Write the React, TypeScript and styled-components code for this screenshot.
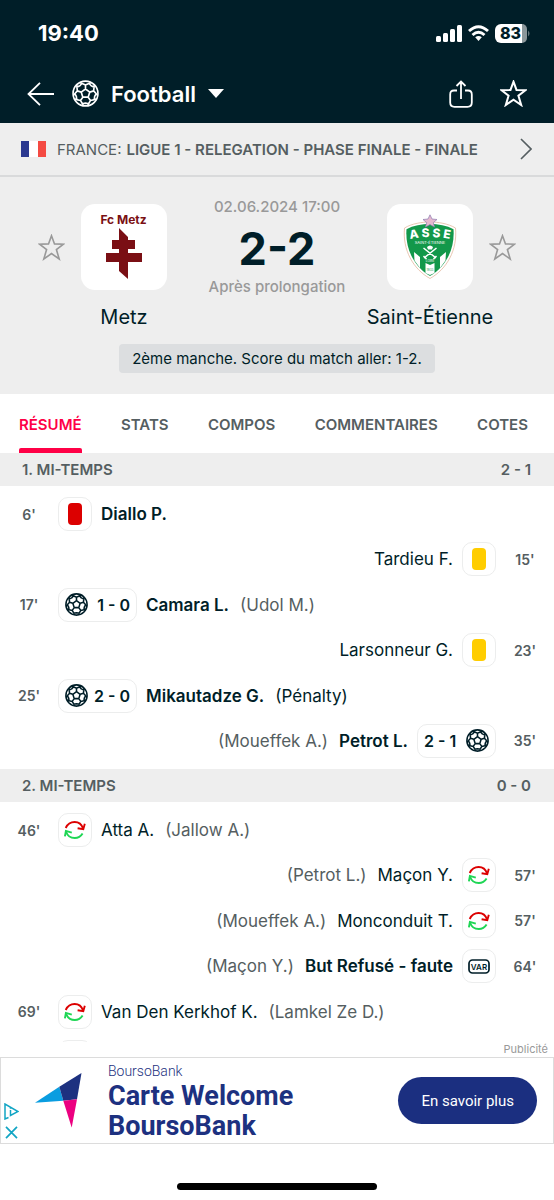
import React from "react";
import styled, { createGlobalStyle } from "styled-components";

const ink = "#001e28";
const grey = "#555e61";
const panel = "#eeeeee";
const accent = "#ff0046";

const GlobalStyle = createGlobalStyle`
  *, *::before, *::after { box-sizing: border-box; }
  body {
    margin: 0;
    background: #fff;
    color: ${ink};
    font-family: Inter, "Liberation Sans", sans-serif;
  }
  button { font: inherit; color: inherit; background: none; border: 0; padding: 0; cursor: pointer; }
  h1, h2, p, ul { margin: 0; padding: 0; }
  svg { display: block; flex: none; }
`;

const Screen = styled.div`
  display: flex;
  flex-direction: column;
  height: 100vh;
  overflow: hidden;
`;

const Header = styled.header`
  flex: none;
  background: ${ink};
  color: #fff;
  padding-top: 18px;
`;

const StatusBar = styled.div`
  display: flex;
  align-items: center;
  justify-content: space-between;
  height: 30px;
  padding: 0 23px 0 38px;
`;

const Clock = styled.time`
  font-size: 22px;
  font-weight: 700;
`;

const StatusIcons = styled.div`
  display: flex;
  align-items: center;
  gap: 6px;
`;

const NavBar = styled.nav`
  display: flex;
  align-items: center;
  height: 75px;
  padding: 16px 27px 0;
`;

const SportButton = styled.button`
  display: flex;
  align-items: center;
  gap: 12px;
  margin: 0 auto 0 18px;
  font-size: 22px;
  font-weight: 600;
`;

const IconButton = styled.button`
  display: flex;
`;

const NavActions = styled.div`
  display: flex;
  align-items: center;
  gap: 27px;
`;

const League = styled.a`
  flex: none;
  display: flex;
  align-items: center;
  height: 54px;
  padding: 0 22px 0 21px;
  background: ${panel};
  border-bottom: 2px solid #d9dadb;
  color: ${grey};
  font-size: 15px;
  text-decoration: none;
  white-space: nowrap;
`;

const Flag = styled.span`
  width: 25px;
  height: 16px;
  margin-right: 11px;
  background: linear-gradient(90deg, #2b3990 0 33%, #fff 33% 67%, #f44a42 67%);
`;

const LeagueName = styled.strong`
  margin-left: 5px;
  margin-right: auto;
  font-weight: 600;
`;

const Match = styled.section`
  flex: none;
  padding: 27px 38px 21px;
  background: ${panel};
`;

const Duel = styled.div`
  display: flex;
  justify-content: space-between;
`;

const Team = styled.div<{ $away?: boolean }>`
  display: grid;
  grid-template-columns: ${(p) => (p.$away ? "86px 27px" : "27px 86px")};
  grid-template-areas: ${(p) => (p.$away ? '"logo star" "name ."' : '"star logo" ". name"')};
  column-gap: 16px;
  row-gap: 14px;
  align-items: center;
`;

const StarButton = styled.button`
  grid-area: star;
  color: #999;
`;

const Logo = styled.div`
  grid-area: logo;
  display: flex;
  align-items: center;
  justify-content: center;
  height: 86px;
  border-radius: 14px;
  background: #fff;
`;

const TeamName = styled.h2`
  grid-area: name;
  justify-self: center;
  font-size: 20px;
  font-weight: 400;
  line-height: 26px;
  white-space: nowrap;
`;

const Result = styled.div`
  display: flex;
  flex-direction: column;
  align-items: center;
  margin-top: -7px;
  color: #999;
  font-size: 15px;
  font-weight: 500;
  line-height: 20px;
  white-space: nowrap;
`;

const Score = styled.h1`
  margin: 12px 0 8px;
  color: ${ink};
  font-size: 45px;
  font-weight: 700;
  line-height: 40px;
`;

const Note = styled.p`
  width: fit-content;
  margin: 14px auto 0;
  padding: 0 13px;
  border-radius: 4px;
  background: #dcdee0;
  font-size: 15px;
  line-height: 29px;
`;

const Tabs = styled.div`
  flex: none;
  display: flex;
  justify-content: space-between;
  height: 59px;
  padding: 0 26px 0 19px;
`;

const Tab = styled.button<{ $active?: boolean }>`
  padding-top: 6px;
  border-bottom: 5px solid transparent;
  color: ${(p) => (p.$active ? accent : grey)};
  font-size: 15px;
  font-weight: 600;
  position: relative;

  &::after {
    content: "";
    position: absolute;
    inset: auto 0 -5px;
    height: 5px;
    border-radius: 2px 2px 0 0;
    background: ${(p) => (p.$active ? accent : "transparent")};
  }
`;

const Timeline = styled.main`
  flex: 1 1 0;
  min-height: 0;
  overflow: hidden;
`;

const PeriodBar = styled.h2`
  display: flex;
  justify-content: space-between;
  padding: 0 23px 0 22px;
  background: ${panel};
  color: ${grey};
  font-size: 15px;
  font-weight: 600;
  line-height: 33px;
`;

const EventList = styled.ul`
  display: flex;
  flex-direction: column;
  justify-content: space-between;
  min-height: 283px;
  padding: 11px 0;
  list-style: none;
`;

const EventRow = styled.li<{ $away?: boolean }>`
  display: flex;
  flex-direction: ${(p) => (p.$away ? "row-reverse" : "row")};
  align-items: center;
  height: 34px;
  font-size: 17px;
  white-space: nowrap;
`;

const Minute = styled.span`
  width: 58px;
  color: ${grey};
  font-size: 14px;
  font-weight: 600;
  text-align: center;
`;

const Chip = styled.span<{ $away?: boolean; $wide?: boolean }>`
  display: flex;
  flex-direction: ${(p) => (p.$away ? "row-reverse" : "row")};
  align-items: center;
  justify-content: ${(p) => (p.$wide ? "space-between" : "center")};
  width: ${(p) => (p.$wide ? "79px" : "34px")};
  height: 34px;
  padding: 0 6px;
  border: 1px solid #eceded;
  border-radius: 10px;
  font-size: 16px;
  font-weight: 600;
`;

const Card = styled.span<{ $color: string }>`
  flex: none;
  width: 14px;
  height: 22px;
  border-radius: 4px;
  background: ${(p) => p.$color};
`;

const Player = styled.span<{ $bold?: boolean }>`
  margin: 0 9px;
  font-weight: ${(p) => (p.$bold ? 600 : 400)};
`;

const Detail = styled.span<{ $dark?: boolean }>`
  margin: 0 2px;
  color: ${(p) => (p.$dark ? ink : grey)};
`;

const AdLabel = styled.p`
  flex: none;
  padding-right: 6px;
  color: #999;
  font-size: 11px;
  line-height: 15px;
  text-align: right;
`;

const Ad = styled.aside`
  flex: none;
  display: flex;
  align-items: center;
  height: 87px;
  padding: 0 16px 0 3px;
  border: 1px solid #dcdcdc;
  color: #1d3180;
  font-family: Roboto, sans-serif;
`;

const AdMarks = styled.div`
  align-self: flex-end;
  display: flex;
  flex-direction: column;
  gap: 6px;
  margin: 0 16px 4px 0;
`;

const AdCopy = styled.div`
  margin: 0 auto 0 26px;
`;

const Brand = styled.p`
  font-size: 14px;
  font-weight: 300;
  line-height: 20px;
`;

const AdTitle = styled.p`
  font-size: 27px;
  font-weight: 700;
  line-height: 30px;
`;

const AdButton = styled.button`
  height: 47px;
  padding: 0 23px;
  border-radius: 24px;
  background: #1b2f80;
  color: #fff;
  font-size: 15px;
  white-space: nowrap;
`;

const HomeArea = styled.footer`
  flex: none;
  display: flex;
  justify-content: center;
  align-items: flex-end;
  height: 56px;
  padding-bottom: 10px;
`;

const HomeIndicator = styled.span`
  width: 36%;
  height: 7px;
  border-radius: 4px;
  background: #000;
`;

const polar = (r: number, deg: number) => {
  const a = (deg * Math.PI) / 180;
  return `${(14 + r * Math.cos(a)).toFixed(2)} ${(14 + r * Math.sin(a)).toFixed(2)}`;
};

// Centre pentagon, a spoke from each corner, and the rim seams of the outer panels.
const ballSeams = [0, 1, 2, 3, 4]
  .map((k) => {
    const a = -90 + 72 * k;
    return [
      `M${polar(4.7, a)}L${polar(4.7, a + 72)}`,
      `M${polar(4.7, a)}L${polar(8.9, a)}`,
      `M${polar(12.9, a - 27)}L${polar(8.9, a)}L${polar(12.9, a + 27)}`,
      `M${polar(11.2, a + 18)}L${polar(10, a + 36)}L${polar(11.2, a + 54)}`,
    ].join("");
  })
  .join("");

const Ball = ({ size, stroke = 1.9 }: { size: number; stroke?: number }) => (
  <svg width={size} height={size} viewBox="0 0 28 28" fill="none" stroke="currentColor" strokeWidth={stroke} strokeLinejoin="round">
    <circle cx="14" cy="14" r="12.9" />
    <path d={ballSeams} />
  </svg>
);

const Star = ({ width = 2 }: { width?: number }) => (
  <svg width="27" height="27" viewBox="0 0 27 27" fill="none" stroke="currentColor" strokeWidth={width}>
    <path d="M13.5 1.7 16.5 9.9 25.5 10.2 18.4 15.6 21.2 25 13.5 19.6 5.8 25 8.6 15.6 1.5 10.2 10.5 9.9Z" />
  </svg>
);

const Swap = () => (
  <svg width="22" height="18" viewBox="0 0 22 18" fill="none" strokeWidth="1.9">
    <g stroke="#dc0000">
      <path d="M1.7 7C3.8 2.5 7 1 10.6 1c4 0 7.2 2.6 8.4 6.6" />
      <path d="M13.6 7.3 19.3 8.2 20.8 2.7" />
    </g>
    <g stroke="#1fd655">
      <path d="M18.6 12.5C16.6 15.7 13.9 17 10.8 17 6.700 17 3.3 14.6 2 10.5" />
      <path d="M.9 15.3 1.9 9.9 7.8 11.7" />
    </g>
  </svg>
);

const Var = () => (
  <svg width="22" height="15" viewBox="0 0 22 15">
    <rect x="1" y="1" width="20" height="13" rx="3.5" fill="none" stroke={ink} strokeWidth="1.7" />
    <text x="11" y="10.8" textAnchor="middle" fontSize="8" fontWeight="600" fill={ink}>VAR</text>
  </svg>
);

const MetzLogo = () => (
  <svg width="60" height="70" viewBox="0 0 60 70" fill="#7a0f14">
    <text x="29.5" y="12" textAnchor="middle" fontSize="12" fontWeight="700">Fc Metz</text>
    <path d="M25 16 34 25V28H41V37H34V41H48V50H34V67L25 59V50H12V41H25V37H18V28H25Z" />
  </svg>
);

const AsseLogo = () => (
  <svg width="54" height="66" viewBox="0 0 54 66">
    <path d="M27 8C35 8 45 9.500 52.500 14 54.500 36 44 55 27 64.500 10 55-.5 36 1.500 14 9 9.500 19 8 27 8Z" fill="#fff" stroke="#e3b9a0" strokeWidth=".8" />
    <path d="M27 10C35 10 44 11.500 50.500 15.200 52 35 43 52.500 27 62 11 52.500 2 35 3.500 15.200 10 11.500 19 10 27 10Z" fill="#12984a" />
    <path d="M11 38 17 43V54L11.500 46.500ZM43 38 37 43V54L42.500 46.500ZM22.500 49 27 51 31.500 49V59L27 61 22.500 59Z" fill="#fff" />
    <path d="M20.500 34 33 44M33.500 34 21 44M20.500 42 23.500 45M33.500 42 30.500 45" stroke="#fff" strokeWidth="1.5" />
    <path d="M24 33Q27 30 30 33L29 35.500H25Z" fill="#fff" />
    <path id="asse-arc" d="M5 25.500Q27 20.500 49 25.500" fill="none" />
    <text fill="#fff" fontSize="12" fontWeight="800">
      <textPath href="#asse-arc" startOffset="50%" textAnchor="middle">A S S E</textPath>
    </text>
    <text x="27" y="29.8" textAnchor="middle" fill="#fff" fontSize="4">SAINT-ÉTIENNE</text>
    <text x="27" y="48.2" textAnchor="middle" fill="#fff" fontSize="3">LOIRE</text>
    <text x="27" y="56.5" textAnchor="middle" fill="#12984a" fontSize="3">1933</text>
    <path d="M27 .8 29 5 34 5.500 30.300 8.600 31.500 13 27 10.600 22.500 13 23.700 8.600 20 5.500 25 5Z" fill="#e7b9cf" stroke="#8d7bb0" strokeWidth=".7" />
  </svg>
);

type MatchEvent = {
  minute: string;
  kind: "red" | "yellow" | "goal" | "swap" | "var";
  player?: string;
  detail?: string;
  score?: string;
  away?: boolean;
  bold?: boolean;
  darkDetail?: boolean;
};

const periods: { title: string; score: string; events: MatchEvent[] }[] = [
  {
    title: "1. MI-TEMPS",
    score: "2 - 1",
    events: [
      { minute: "6'", kind: "red", player: "Diallo P.", bold: true },
      { minute: "15'", kind: "yellow", player: "Tardieu F.", away: true },
      { minute: "17'", kind: "goal", score: "1 - 0", player: "Camara L.", detail: "(Udol M.)", bold: true },
      { minute: "23'", kind: "yellow", player: "Larsonneur G.", away: true },
      { minute: "25'", kind: "goal", score: "2 - 0", player: "Mikautadze G.", detail: "(Pénalty)", bold: true, darkDetail: true },
      { minute: "35'", kind: "goal", score: "2 - 1", player: "Petrot L.", detail: "(Moueffek A.)", bold: true, away: true },
    ],
  },
  {
    title: "2. MI-TEMPS",
    score: "0 - 0",
    events: [
      { minute: "46'", kind: "swap", player: "Atta A.", detail: "(Jallow A.)" },
      { minute: "57'", kind: "swap", player: "Maçon Y.", detail: "(Petrot L.)", away: true },
      { minute: "57'", kind: "swap", player: "Monconduit T.", detail: "(Moueffek A.)", away: true },
      { minute: "64'", kind: "var", player: "But Refusé - faute", detail: "(Maçon Y.)", bold: true, away: true },
      { minute: "69'", kind: "swap", player: "Van Den Kerkhof K.", detail: "(Lamkel Ze D.)" },
      { minute: "", kind: "swap" },
    ],
  },
];

const Mark = ({ kind }: { kind: MatchEvent["kind"] }) => {
  switch (kind) {
    case "red":
      return <Card $color="#dc0000" />;
    case "yellow":
      return <Card $color="#ffcd00" />;
    case "goal":
      return <Ball size={23} />;
    case "swap":
      return <Swap />;
    case "var":
      return <Var />;
  }
};

const tabs = ["RÉSUMÉ", "STATS", "COMPOS", "COMMENTAIRES", "COTES"];

export default function App() {
  return (
    <Screen>
      <GlobalStyle />
      <Header>
        <StatusBar>
          <Clock>19:40</Clock>
          <StatusIcons>
            <svg width="26" height="17" viewBox="0 0 26 17" fill="#fff">
              <rect x="0" y="11" width="5" height="6" rx="1.5" />
              <rect x="7" y="8" width="5" height="9" rx="1.5" />
              <rect x="14" y="4" width="5" height="13" rx="1.5" />
              <rect x="21" y="0" width="5" height="17" rx="1.5" />
            </svg>
            <svg width="21" height="17" viewBox="0 0 21 17" fill="none" stroke="#fff" strokeWidth="2.9">
              <path d="M1 6Q10.500-2.600 20 6" />
              <path d="M4.500 10Q10.500 4.600 16.500 10" />
              <path d="M7.200 12.300Q10.500 9.600 13.800 12.300L10.500 16Z" fill="#fff" stroke="none" />
            </svg>
            <svg width="36" height="19" viewBox="0 0 36 19">
              <path d="M6 0H27V19H6A6 6 0 0 1 0 13V6A6 6 0 0 1 6 0Z" fill="#fff" />
              <path d="M27 0A5 5 0 0 1 32 5V14A5 5 0 0 1 27 19Z" fill="#8b979b" />
              <path d="M33.300 6.500Q35.500 9.500 33.300 12.500Z" fill="#8b979b" />
              <text x="15.5" y="15" textAnchor="middle" fontSize="16" fontWeight="800" fill={ink}>83</text>
            </svg>
          </StatusIcons>
        </StatusBar>
        <NavBar>
          <IconButton aria-label="Retour">
            <svg width="27" height="24" viewBox="0 0 27 24" fill="none" stroke="#fff" strokeWidth="1.8">
              <path d="M27 12H1.500M13 .8 1.500 12 13 23.200" />
            </svg>
          </IconButton>
          <SportButton>
            <Ball size={27} stroke={1.7} />
            Football
            <svg width="16" height="9" viewBox="0 0 16 9" fill="#fff">
              <path d="M0 0H16L8 9Z" />
            </svg>
          </SportButton>
          <NavActions>
            <IconButton aria-label="Partager">
              <svg width="24" height="28" viewBox="0 0 24 28" fill="none" stroke="#fff" strokeWidth="1.8">
                <path d="M8 10.500H5Q1.200 10.500 1.200 14.500V22.500Q1.200 26.800 5.500 26.800H18.500Q22.800 26.800 22.800 22.500V14.500Q22.800 10.500 19 10.500H16M12 19V1.500M7.500 6 12 1.500 16.500 6" />
              </svg>
            </IconButton>
            <IconButton aria-label="Ajouter aux favoris">
              <Star />
            </IconButton>
          </NavActions>
        </NavBar>
      </Header>

      <League href="#ligue">
        <Flag />
        FRANCE:
        <LeagueName>LIGUE 1 - RELEGATION - PHASE FINALE - FINALE</LeagueName>
        <svg width="12" height="22" viewBox="0 0 12 22" fill="none" stroke={grey} strokeWidth="1.6">
          <path d="M1 1 11 11 1 21" />
        </svg>
      </League>

      <Match>
        <Duel>
          <Team>
            <StarButton aria-label="Suivre Metz"><Star width={1.6} /></StarButton>
            <Logo><MetzLogo /></Logo>
            <TeamName>Metz</TeamName>
          </Team>
          <Result>
            <time>02.06.2024 17:00</time>
            <Score>2-2</Score>
            <span>Après prolongation</span>
          </Result>
          <Team $away>
            <Logo><AsseLogo /></Logo>
            <StarButton aria-label="Suivre Saint-Étienne"><Star width={1.6} /></StarButton>
            <TeamName>Saint-Étienne</TeamName>
          </Team>
        </Duel>
        <Note>2ème manche. Score du match aller: 1-2.</Note>
      </Match>

      <Tabs role="tablist">
        {tabs.map((label, i) => (
          <Tab key={label} role="tab" aria-selected={i === 0} $active={i === 0}>{label}</Tab>
        ))}
      </Tabs>

      <Timeline>
        {periods.map((period) => (
          <section key={period.title}>
            <PeriodBar>
              <span>{period.title}</span>
              <span>{period.score}</span>
            </PeriodBar>
            <EventList>
              {period.events.map((event, i) => (
                <EventRow key={i} $away={event.away}>
                  <Minute>{event.minute}</Minute>
                  <Chip $away={event.away} $wide={Boolean(event.score)}>
                    <Mark kind={event.kind} />
                    {event.score && <span>{event.score}</span>}
                  </Chip>
                  {event.player && <Player $bold={event.bold}>{event.player}</Player>}
                  {event.detail && <Detail $dark={event.darkDetail}>{event.detail}</Detail>}
                </EventRow>
              ))}
            </EventList>
          </section>
        ))}
      </Timeline>

      <AdLabel>Publicité</AdLabel>
      <Ad>
        <AdMarks>
          <svg width="15" height="17" viewBox="0 0 15 17" fill="none" stroke="#12a5c4" strokeWidth="1.5">
            <path d="M4.500 14.500 1 16V1L14 8.500 6.500 12.500V7M6.500 4.300V5.800" />
          </svg>
          <svg width="15" height="13" viewBox="0 0 15 13" stroke="#12a5c4" strokeWidth="1.7">
            <path d="M2 .8 13 12.200M13 .8 2 12.200" />
          </svg>
        </AdMarks>
        <svg width="47" height="55" viewBox="0 0 47 55">
          <path d="M0 29.700 24.300 13.700 28.300 27.700Z" fill="#0a9de0" />
          <path d="M46.500 0 24.300 13.700 28.300 27.700 42 26.300Z" fill="#1d3180" />
          <path d="M28.300 27.700 42 26.300 36.700 54.500Z" fill="#ec0080" />
        </svg>
        <AdCopy>
          <Brand>BoursoBank</Brand>
          <AdTitle>Carte Welcome<br />BoursoBank</AdTitle>
        </AdCopy>
        <AdButton>En savoir plus</AdButton>
      </Ad>

      <HomeArea>
        <HomeIndicator />
      </HomeArea>
    </Screen>
  );
}
